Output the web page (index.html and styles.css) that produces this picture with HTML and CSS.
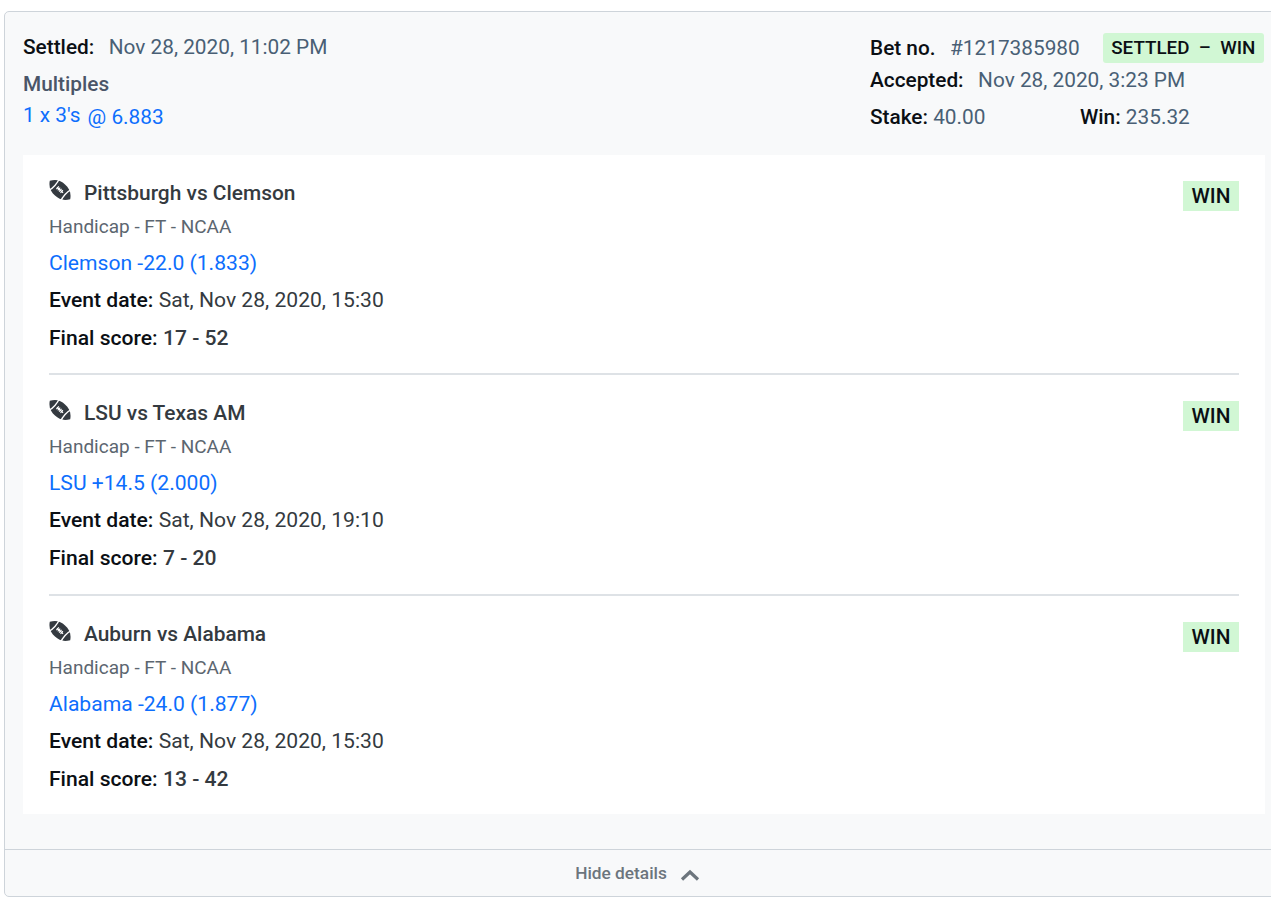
FILE: index.html
```html
<!DOCTYPE html>
<html lang="en">
<head>
<meta charset="utf-8">
<title>Bet details</title>
<link rel="stylesheet" href="styles.css">
</head>
<body>
<svg class="defs" width="0" height="0" aria-hidden="true">
  <symbol id="football" viewBox="0 0 24 24">
    <g transform="rotate(42 12 12)">
      <path fill="#343a40" d="M-3 12C1 5.500 6 3.800 12 3.800S23 5.500 27 12c-4 6.500-9 8.200-15 8.200S1 18.500 -3 12z"/>
      <path fill="none" stroke="#fff" stroke-width="1.500" d="M3.200 3.500C5 8 5 16 3.200 20.500M20.800 3.500C19 8 19 16 20.800 20.500"/>
      <path fill="none" stroke="#fff" stroke-width="1.200" d="M7.500 12h9M8.500 10v4M10.500 10v4M12.500 10v4M14.500 10v4"/>
    </g>
  </symbol>
</svg>
<main class="card">
  <header class="summary">
    <div class="summary-left">
      <div class="line settled"><b class="label">Settled:</b><span class="muted gap">Nov 28, 2020, 11:02 PM</span></div>
      <div class="bet-type">Multiples</div>
      <div class="odds"><span class="odds-count">1 x 3's</span><span class="odds-price">@ 6.883</span></div>
    </div>
    <div class="summary-right">
      <div class="line bet-no"><b class="label">Bet no.</b><span class="muted gap">#1217385980</span><span class="status">SETTLED &nbsp;–&nbsp; WIN</span></div>
      <div class="line accepted"><b class="label">Accepted:</b><span class="muted gap">Nov 28, 2020, 3:23 PM</span></div>
      <div class="line amounts">
        <span class="stake"><b class="label">Stake:</b> <span class="muted">40.00</span></span>
        <span><b class="label">Win:</b> <span class="muted">235.32</span></span>
      </div>
    </div>
  </header>
  <section class="legs">
    <article class="leg">
      <div class="leg-head">
        <h2 class="match"><svg class="ball"><use href="#football"/></svg>Pittsburgh vs Clemson</h2>
        <span class="result">WIN</span>
      </div>
      <div class="market">Handicap - FT - NCAA</div>
      <div class="pick">Clemson -22.0 (1.833)</div>
      <div class="info"><b class="label">Event date:</b> Sat, Nov 28, 2020, 15:30</div>
      <div class="info"><b class="label">Final score:</b> <span class="score">17 - 52</span></div>
    </article>
    <article class="leg">
      <div class="leg-head">
        <h2 class="match"><svg class="ball"><use href="#football"/></svg>LSU vs Texas AM</h2>
        <span class="result">WIN</span>
      </div>
      <div class="market">Handicap - FT - NCAA</div>
      <div class="pick">LSU +14.5 (2.000)</div>
      <div class="info"><b class="label">Event date:</b> Sat, Nov 28, 2020, 19:10</div>
      <div class="info"><b class="label">Final score:</b> <span class="score">7 - 20</span></div>
    </article>
    <article class="leg">
      <div class="leg-head">
        <h2 class="match"><svg class="ball"><use href="#football"/></svg>Auburn vs Alabama</h2>
        <span class="result">WIN</span>
      </div>
      <div class="market">Handicap - FT - NCAA</div>
      <div class="pick">Alabama -24.0 (1.877)</div>
      <div class="info"><b class="label">Event date:</b> Sat, Nov 28, 2020, 15:30</div>
      <div class="info"><b class="label">Final score:</b> <span class="score">13 - 42</span></div>
    </article>
  </section>
  <footer class="toggle">
    <span>Hide details</span>
    <svg class="chevron" viewBox="0 0 20 12"><path d="M2 10.500 10 3l8 7.500" fill="none" stroke="#6c757d" stroke-width="3.200"/></svg>
  </footer>
</main>
</body>
</html>
```

FILE: styles.css
```css
html, body { margin: 0; padding: 0; background: #fff; overflow: hidden; }
body { height: 901px; font-family: Roboto, "Liberation Sans", sans-serif; font-size: 20.8px; color: #343a40; }
.defs { display: block; height: 0; }
.card {
  box-sizing: border-box; width: 1280px; height: 886px; margin: 11px 0 0 4px;
  background: #f8f9fa; border: 1px solid #ced4da; border-radius: 5px;
  display: flex; flex-direction: column;
}
.summary { box-sizing: border-box; width: 1261px; height: 143px; padding: 20px 0 0 18px; display: flex; justify-content: space-between; }
.label { font-weight: 500; color: #0b0f14; white-space: nowrap; }
.muted { color: #495f75; white-space: nowrap; }
.gap { margin-left: 14.500px; }
.line { display: flex; align-items: center; line-height: 30px; }
.summary-left .settled { height: 30px; }
.bet-type { margin-top: 8px; line-height: 28px; font-weight: 500; color: #4a5568; }
.odds { line-height: 34px; color: #0d6efd; display: flex; align-items: baseline; gap: 7px; }
.odds-price { position: relative; top: 2px; }
.summary-right { width: 396px; padding-top: 1px; }
.status { margin-left: 23px; background: #d1f7d4; border-radius: 3px; padding: 0 8.500px; font-size: 18.800px; font-weight: 500; color: #0b0f14; line-height: 30px; height: 30px; white-space: nowrap; }
.bet-no { height: 30px; }
.accepted { height: 34px; }
.amounts { height: 40px; display: flex; }
.stake { width: 210px; }
.legs { box-sizing: border-box; margin-left: 18px; width: 1242px; height: 659px; background: #fff; padding: 25.900px 26px 0; }
.leg { height: 192.500px; border-bottom: 2px solid #dee2e6; margin-bottom: 26px; }
.leg:last-child { border-bottom: 0; margin-bottom: 0; }
.leg-head { display: flex; justify-content: space-between; height: 30px; align-items: flex-start; }
.match { margin: 0; font-size: 20.900px; font-weight: 500; line-height: 24px; color: #343a40; display: flex; align-items: center; }
.ball { width: 22px; height: 22px; margin-right: 13px; position: relative; top: -3px; }
.result { background: #d1f7d4; color: #0b0f14; font-weight: 500; line-height: 30px; padding: 0 8.500px; }
.market { font-size: 19px; line-height: 32px; color: #5c6670; }
.pick { margin-top: 2.100px; line-height: 36px; color: #0d6efd; font-size: 21.100px; }
.info { line-height: 38px; color: #343a40; font-size: 21.100px; }
.score { font-weight: 500; }
.toggle {
  margin-top: auto; box-sizing: border-box; height: 47px; border-top: 1px solid #ced4da;
  display: flex; align-items: center; justify-content: center; gap: 13px; padding-right: 13px;
  font-size: 17.300px; font-weight: 500; color: #6c757d;
}
.chevron { width: 20px; height: 12px; position: relative; top: 2px; }
```
